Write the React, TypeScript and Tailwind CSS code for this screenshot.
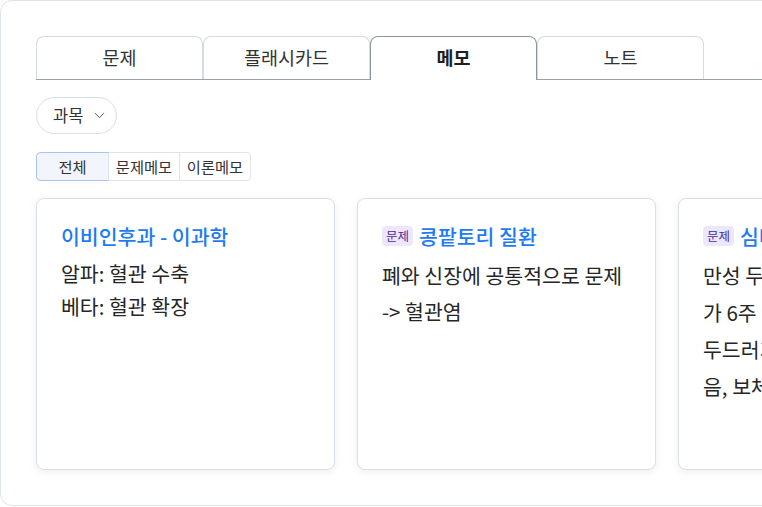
import { useState } from 'react'
import { ChevronDown } from 'lucide-react'

type Memo = {
  id: number
  tag?: string
  title: string
  lines: string[]
  leading: string
}

const memos: Memo[] = [
  { id: 1, title: '이비인후과 - 이과학', lines: ['알파: 혈관 수축', '베타: 혈관 확장'], leading: 'leading-[33px]' },
  { id: 2, tag: '문제', title: '콩팥토리 질환', lines: ['폐와 신장에 공통적으로 문제', '-> 혈관염'], leading: 'leading-[36px]' },
  {
    id: 3,
    tag: '문제',
    title: '심마진 두드러기',
    lines: ['만성 두드러기: 증상이', '가 6주 이상 지속되는', '두드러기, 원인 불명이 많', '음, 보체 검사 시행'],
    leading: 'leading-[37px]',
  },
]

const tabs = ['문제', '플래시카드', '메모', '노트']
const kinds = ['전체', '문제메모', '이론메모']

export default function App() {
  const [tab, setTab] = useState('메모')
  const [kind, setKind] = useState('전체')

  return (
    <div className="w-[762px] h-[507px] overflow-hidden bg-white font-['Noto_Sans_CJK_KR',sans-serif]">
      <div className="w-[1060px] h-[506px] border border-[#dfe3eb] rounded-xl pl-[35px] pt-[35px]">
        {/* Tabs */}
        <div className="flex items-end border-b border-[#9aa1ad]">
          {tabs.map(t => (
            <button
              key={t}
              onClick={() => setTab(t)}
              className={`w-[167px] flex items-center justify-center rounded-t-lg border border-b-0 text-[18.5px] ${
                tab === t
                  ? 'relative -mb-px h-[44px] pb-px bg-white border-[#8e95a1] font-bold text-[#1f1f1f]'
                  : 'h-[43px] border-[#d5dbe5] text-[#333]'
              }`}
            >
              {t}
            </button>
          ))}
        </div>

        {/* Subject dropdown */}
        <button className="mt-[17px] h-[37px] w-[81px] flex items-center gap-[8px] pl-[16px] rounded-full border border-[#d9dee8] text-[16.5px] text-[#333]">
          과목
          <ChevronDown size={17} strokeWidth={1.4} className="text-[#555]" />
        </button>

        {/* Memo kind */}
        <div className="mt-[18px] flex w-fit rounded border border-[#dfe3eb]">
          {kinds.map((k, i) => (
            <button
              key={k}
              onClick={() => setKind(k)}
              className={`w-[71px] h-[27px] flex items-center justify-center text-[15.3px] text-[#333] ${
                i > 0 ? 'border-l border-[#dfe3eb]' : ''
              } ${kind === k ? 'bg-[#f2f5fc] outline outline-1 outline-[#a9c3f3] rounded-l' : ''}`}
            >
              {k}
            </button>
          ))}
        </div>

        {/* Cards */}
        <div className="mt-[17px] flex gap-[22px]">
          {memos.map(m => (
            <div
              key={m.id}
              className="w-[299px] h-[272px] shrink-0 rounded-lg border border-[#dadfea] bg-white px-[24px] pt-[22px] shadow-[0_2px_8px_rgba(15,23,42,0.07)]"
            >
              <div className="flex items-center gap-[6px] h-[30px]">
                {m.tag && (
                  <span className="px-[4px] h-[20px] flex items-center rounded bg-[#ece7fd] text-[12.5px] text-[#4b2a9c]">
                    {m.tag}
                  </span>
                )}
                <span className="text-[20.5px] font-medium text-[#1f7bf2] whitespace-nowrap">{m.title}</span>
              </div>
              <div className={`mt-[6px] text-[20.5px] text-[#262626] whitespace-nowrap ${m.leading}`}>
                {m.lines.map(l => (
                  <p key={l}>{l}</p>
                ))}
              </div>
            </div>
          ))}
        </div>
      </div>
    </div>
  )
}
